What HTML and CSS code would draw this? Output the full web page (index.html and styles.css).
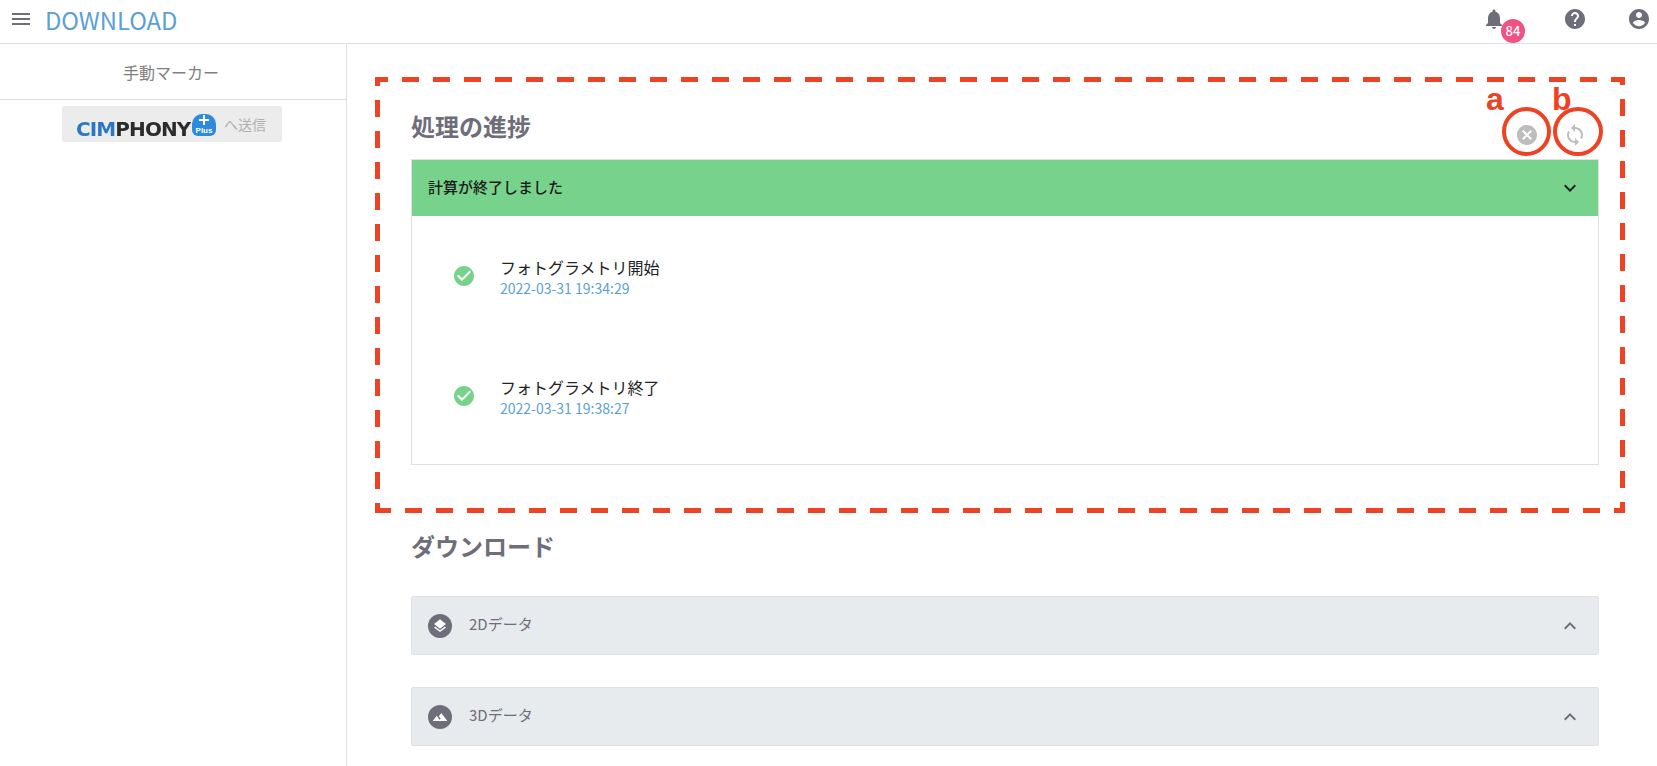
FILE: index.html
```html
<!DOCTYPE html>
<html lang="ja">
<head>
  <meta charset="UTF-8">
  <title>Download</title>
  <link rel="stylesheet" href="styles.css">
</head>
<body>
  <header class="topbar">
    <button class="menu-btn" aria-label="menu">
      <svg viewBox="0 0 24 24" width="24" height="24"><path d="M3 18h18v-2H3v2zm0-5h18v-2H3v2zm0-7v2h18V6H3z"/></svg>
    </button>
    <h1 class="page-title">DOWNLOAD</h1>
    <div class="top-icons">
      <span class="bell">
        <svg viewBox="0 0 24 24" width="24" height="24"><path d="M12 22c1.1 0 2-.9 2-2h-4c0 1.1.9 2 2 2zm6-6v-5c0-3.07-1.63-5.64-4.5-6.32V4c0-.83-.67-1.5-1.5-1.5s-1.5.67-1.5 1.5v.68C7.64 5.36 6 7.92 6 11v5l-2 2v1h16v-1l-2-2z"/></svg>
        <span class="badge">84</span>
      </span>
      <svg viewBox="0 0 24 24" width="24" height="24"><path d="M12 2C6.48 2 2 6.48 2 12s4.48 10 10 10 10-4.48 10-10S17.52 2 12 2zm1 17h-2v-2h2v2zm2.07-7.75l-.9.92C13.45 12.9 13 13.5 13 15h-2v-.5c0-1.1.45-2.1 1.17-2.83l1.24-1.26c.37-.36.59-.86.59-1.41 0-1.1-.9-2-2-2s-2 .9-2 2H8c0-2.21 1.79-4 4-4s4 1.79 4 4c0 .88-.36 1.68-.93 2.25z"/></svg>
      <svg viewBox="0 0 24 24" width="24" height="24"><path d="M12 2C6.48 2 2 6.48 2 12s4.48 10 10 10 10-4.48 10-10S17.52 2 12 2zm0 3c1.66 0 3 1.34 3 3s-1.34 3-3 3-3-1.34-3-3 1.34-3 3-3zm0 14.2c-2.5 0-4.71-1.28-6-3.22.03-1.99 4-3.08 6-3.08 1.99 0 5.97 1.09 6 3.08-1.29 1.94-3.5 3.22-6 3.22z"/></svg>
    </div>
  </header>

  <div class="layout">
    <aside class="sidebar">
      <div class="side-title">手動マーカー</div>
      <div class="side-send">
        <div class="send-btn">
          <span class="logo-text">CIMPHONY</span>
          <span class="logo-plus">
            <svg viewBox="0 0 12 12" width="12" height="12"><path d="M5 1h2v4h4v2H7v4H5V7H1V5h4z"/></svg>
            <i>Plus</i>
          </span>
          <span class="send-label">へ送信</span>
        </div>
      </div>
    </aside>

    <main class="content">
      <section class="progress">
        <div class="section-head">
          <h2>処理の進捗</h2>
          <div class="head-actions">
            <svg viewBox="0 0 24 24" width="24" height="24"><path d="M12 2C6.47 2 2 6.47 2 12s4.47 10 10 10 10-4.47 10-10S17.53 2 12 2zm5 13.59L15.59 17 12 13.41 8.41 17 7 15.59 10.59 12 7 8.41 8.41 7 12 10.59 15.59 7 17 8.41 13.41 12 17 15.59z"/></svg>
            <svg viewBox="0 0 24 24" width="24" height="24"><path d="M12 4V1L8 5l4 4V6c3.31 0 6 2.69 6 6 0 1.01-.25 1.97-.7 2.8l1.46 1.46C19.54 15.03 20 13.57 20 12c0-4.42-3.58-8-8-8zm0 14c-3.31 0-6-2.69-6-6 0-1.01.25-1.97.7-2.8L5.24 7.74C4.46 8.97 4 10.43 4 12c0 4.42 3.58 8 8 8v3l4-4-4-4v3z"/></svg>
          </div>
        </div>
        <div class="card">
          <div class="card-head">
            <span>計算が終了しました</span>
            <svg viewBox="0 0 24 24" width="24" height="24"><path d="M16.59 8.59L12 13.17 7.41 8.59 6 10l6 6 6-6z"/></svg>
          </div>
          <div class="step">
            <svg viewBox="0 0 24 24" width="24" height="24"><path d="M12 2C6.48 2 2 6.48 2 12s4.48 10 10 10 10-4.48 10-10S17.52 2 12 2zm-2 15l-5-5 1.41-1.41L10 14.17l7.59-7.59L19 8l-9 9z"/></svg>
            <div>
              <div class="step-name">フォトグラメトリ開始</div>
              <div class="step-date">2022-03-31 19:34:29</div>
            </div>
          </div>
          <div class="step">
            <svg viewBox="0 0 24 24" width="24" height="24"><path d="M12 2C6.48 2 2 6.48 2 12s4.48 10 10 10 10-4.48 10-10S17.52 2 12 2zm-2 15l-5-5 1.41-1.41L10 14.17l7.59-7.59L19 8l-9 9z"/></svg>
            <div>
              <div class="step-name">フォトグラメトリ終了</div>
              <div class="step-date">2022-03-31 19:38:27</div>
            </div>
          </div>
        </div>
      </section>

      <section class="downloads">
        <h2>ダウンロード</h2>
        <div class="panel">
          <span class="panel-icon">
            <svg viewBox="0 0 24 24" width="16" height="16"><path d="M11.99 18.54l-7.37-5.73L3 14.07l9 7 9-7-1.63-1.27-7.38 5.74zM12 16l7.36-5.73L21 9l-9-7-9 7 1.63 1.27L12 16z"/></svg>
          </span>
          <span class="panel-name">2Dデータ</span>
          <svg class="chevron" viewBox="0 0 24 24" width="24" height="24"><path d="M12 8l-6 6 1.41 1.41L12 10.83l4.59 4.58L18 14z"/></svg>
        </div>
        <div class="panel">
          <span class="panel-icon">
            <svg viewBox="0 0 24 24" width="16" height="16"><path d="M14 6l-3.75 5 2.85 3.8-1.6 1.2C9.81 13.75 7 10 7 10l-6 8h22L14 6z"/></svg>
          </span>
          <span class="panel-name">3Dデータ</span>
          <svg class="chevron" viewBox="0 0 24 24" width="24" height="24"><path d="M12 8l-6 6 1.41 1.41L12 10.83l4.59 4.58L18 14z"/></svg>
        </div>
      </section>
    </main>
  </div>

  <!-- 説明用の赤い注釈 -->
  <div class="mark-box"></div>
  <span class="mark-ring ring-a"></span>
  <span class="mark-ring ring-b"></span>
  <span class="mark-letter letter-a">a</span>
  <span class="mark-letter letter-b">b</span>
</body>
</html>
```

FILE: styles.css
```css
* {
  box-sizing: border-box;
}
html, body {
  height: 100%;
}
body {
  margin: 0;
  position: relative;
  overflow: hidden;
  background: #fff;
  color: #6e6e7a;
  font-family: "Noto Sans CJK JP", "Noto Sans", sans-serif;
}
svg {
  display: block;
  flex: none;
}

/* top bar */
.topbar {
  display: flex;
  align-items: center;
  height: 44px;
  padding: 0 0 6px 9px;
  border-bottom: 1px solid #e0e0e0;
}
.topbar svg {
  fill: #6e6e7a;
}
.menu-btn {
  padding: 0;
  border: none;
  background: none;
}
.page-title {
  margin: 2px 0 0 12px;
  font-size: 23.8px;
  font-weight: 400;
  line-height: 36px;
  color: #5b9fd6;
}
.top-icons {
  display: flex;
  align-items: center;
  gap: 40px;
  margin-left: auto;
  padding-right: 6px;
}
.bell {
  position: relative;
  margin-right: 17px;
}
.badge {
  position: absolute;
  left: 19px;
  top: 12px;
  width: 24px;
  height: 24px;
  border-radius: 50%;
  background: #ef5285;
  color: #fff;
  font-size: 13px;
  font-weight: 500;
  line-height: 24px;
  text-align: center;
}

.layout {
  display: flex;
  height: calc(100% - 44px);
}

/* left column */
.sidebar {
  width: 347px;
  flex: none;
  border-right: 1px solid #e0e0e0;
}
.side-title {
  height: 56px;
  padding-right: 4px;
  border-bottom: 1px solid #e0e0e0;
  font-size: 16px;
  line-height: 56px;
  text-align: center;
  color: #808080;
}
.side-send {
  display: flex;
  justify-content: center;
  padding: 6px 2px 0 0;
}
.send-btn {
  display: flex;
  align-items: center;
  width: 220px;
  height: 36px;
  padding-left: 14px;
  border-radius: 2px;
  background: #ececec;
}
.logo-text {
  width: 115px;
  margin: 9px 1px 0 0;
  font-family: "DejaVu Sans", sans-serif;
  font-size: 20px;
  font-weight: 700;
  letter-spacing: -0.9px;
  line-height: 20px;
  white-space: nowrap;
  background: linear-gradient(90deg, #2a78c4 0 35%, #2b2b2b 36% 100%);
  -webkit-background-clip: text;
  background-clip: text;
  color: transparent;
}
.logo-plus {
  display: flex;
  flex-direction: column;
  align-items: center;
  width: 24px;
  height: 22px;
  margin-top: 2px;
  border-radius: 10px 10px 6px 6px;
  background: #2f8ade;
  color: #fff;
}
.logo-plus svg {
  fill: #fff;
}
.logo-plus i {
  font-family: "Liberation Sans", sans-serif;
  font-size: 8px;
  font-style: normal;
  font-weight: 700;
  line-height: 10px;
}
.send-label {
  margin-left: 8px;
  font-size: 14px;
  color: #b0b0b0;
}

/* right column */
.content {
  flex: 1;
  padding: 0 58px 0 64px;
}
h2 {
  margin: 0;
  font-size: 24px;
  font-weight: 700;
  line-height: 32px;
  color: #6e6e7a;
}
.progress {
  padding-top: 65px;
}
.section-head {
  display: flex;
  justify-content: space-between;
  height: 50px;
}
.section-head h2 {
  margin-top: 1px;
}
.head-actions {
  display: flex;
  gap: 24px;
  height: 38px;
  padding: 14px 12px 0 0;
}
.head-actions svg {
  fill: #bdbdbd;
}
.card {
  height: 306px;
  border: 1px solid #e0e0e0;
}
.card-head {
  display: flex;
  align-items: center;
  justify-content: space-between;
  height: 56px;
  padding: 0 16px;
  background: #77d28c;
  font-size: 15px;
  font-weight: 500;
  color: #1b1b1b;
}
.card-head span {
  margin-bottom: 4px;
}
.card-head svg {
  fill: #222;
}
.step {
  display: flex;
  align-items: center;
  gap: 24px;
  height: 120px;
  padding-left: 40px;
}
.step svg {
  fill: #77d28c;
}
.step-name {
  font-size: 16px;
  line-height: 22px;
  color: #222;
}
.step-date {
  margin-top: 1px;
  font-size: 14px;
  line-height: 18px;
  color: #5b9fd6;
}

.downloads {
  padding-top: 65px;
}
.downloads h2 {
  margin-bottom: 34px;
}
.panel {
  display: flex;
  align-items: center;
  height: 59px;
  margin-bottom: 32px;
  padding: 0 16px;
  border: 1px solid #dfe1e4;
  border-radius: 2px;
  background: #e8ebee;
}
.panel-icon {
  display: flex;
  align-items: center;
  justify-content: center;
  width: 24px;
  height: 24px;
  border-radius: 50%;
  background: #6e6e7a;
}
.panel-icon svg {
  fill: #fff;
}
.panel-name {
  flex: 1;
  margin: 0 0 4px 17px;
  font-size: 15px;
  color: #6e6e7a;
}
.chevron {
  fill: #6e6e7a;
}

/* annotations drawn over the capture */
.mark-box {
  position: absolute;
  left: 375px;
  top: 77px;
  width: 1250px;
  height: 436px;
  background:
    linear-gradient(90deg, #ee4225 17px, transparent 17px) 27px 0 / 31px 5px repeat-x,
    linear-gradient(90deg, #ee4225 17px, transparent 17px) 30px 100% / 31px 5px repeat-x,
    linear-gradient(#ee4225 17px, transparent 17px) 0 23px / 5px 31px repeat-y,
    linear-gradient(#ee4225 17px, transparent 17px) 100% 22px / 5px 31px repeat-y;
}
.mark-ring {
  position: absolute;
  top: 107px;
  width: 49px;
  height: 49px;
  border: 4px solid #ee4225;
  border-radius: 50%;
}
.ring-a {
  left: 1502px;
}
.ring-b {
  left: 1553px;
  width: 50px;
}
.mark-letter {
  position: absolute;
  top: 76px;
  font-family: "Liberation Sans", sans-serif;
  font-size: 32px;
  font-weight: 700;
  line-height: 46px;
  color: #ee4225;
}
.letter-a {
  left: 1486px;
}
.letter-b {
  left: 1552px;
}
```
